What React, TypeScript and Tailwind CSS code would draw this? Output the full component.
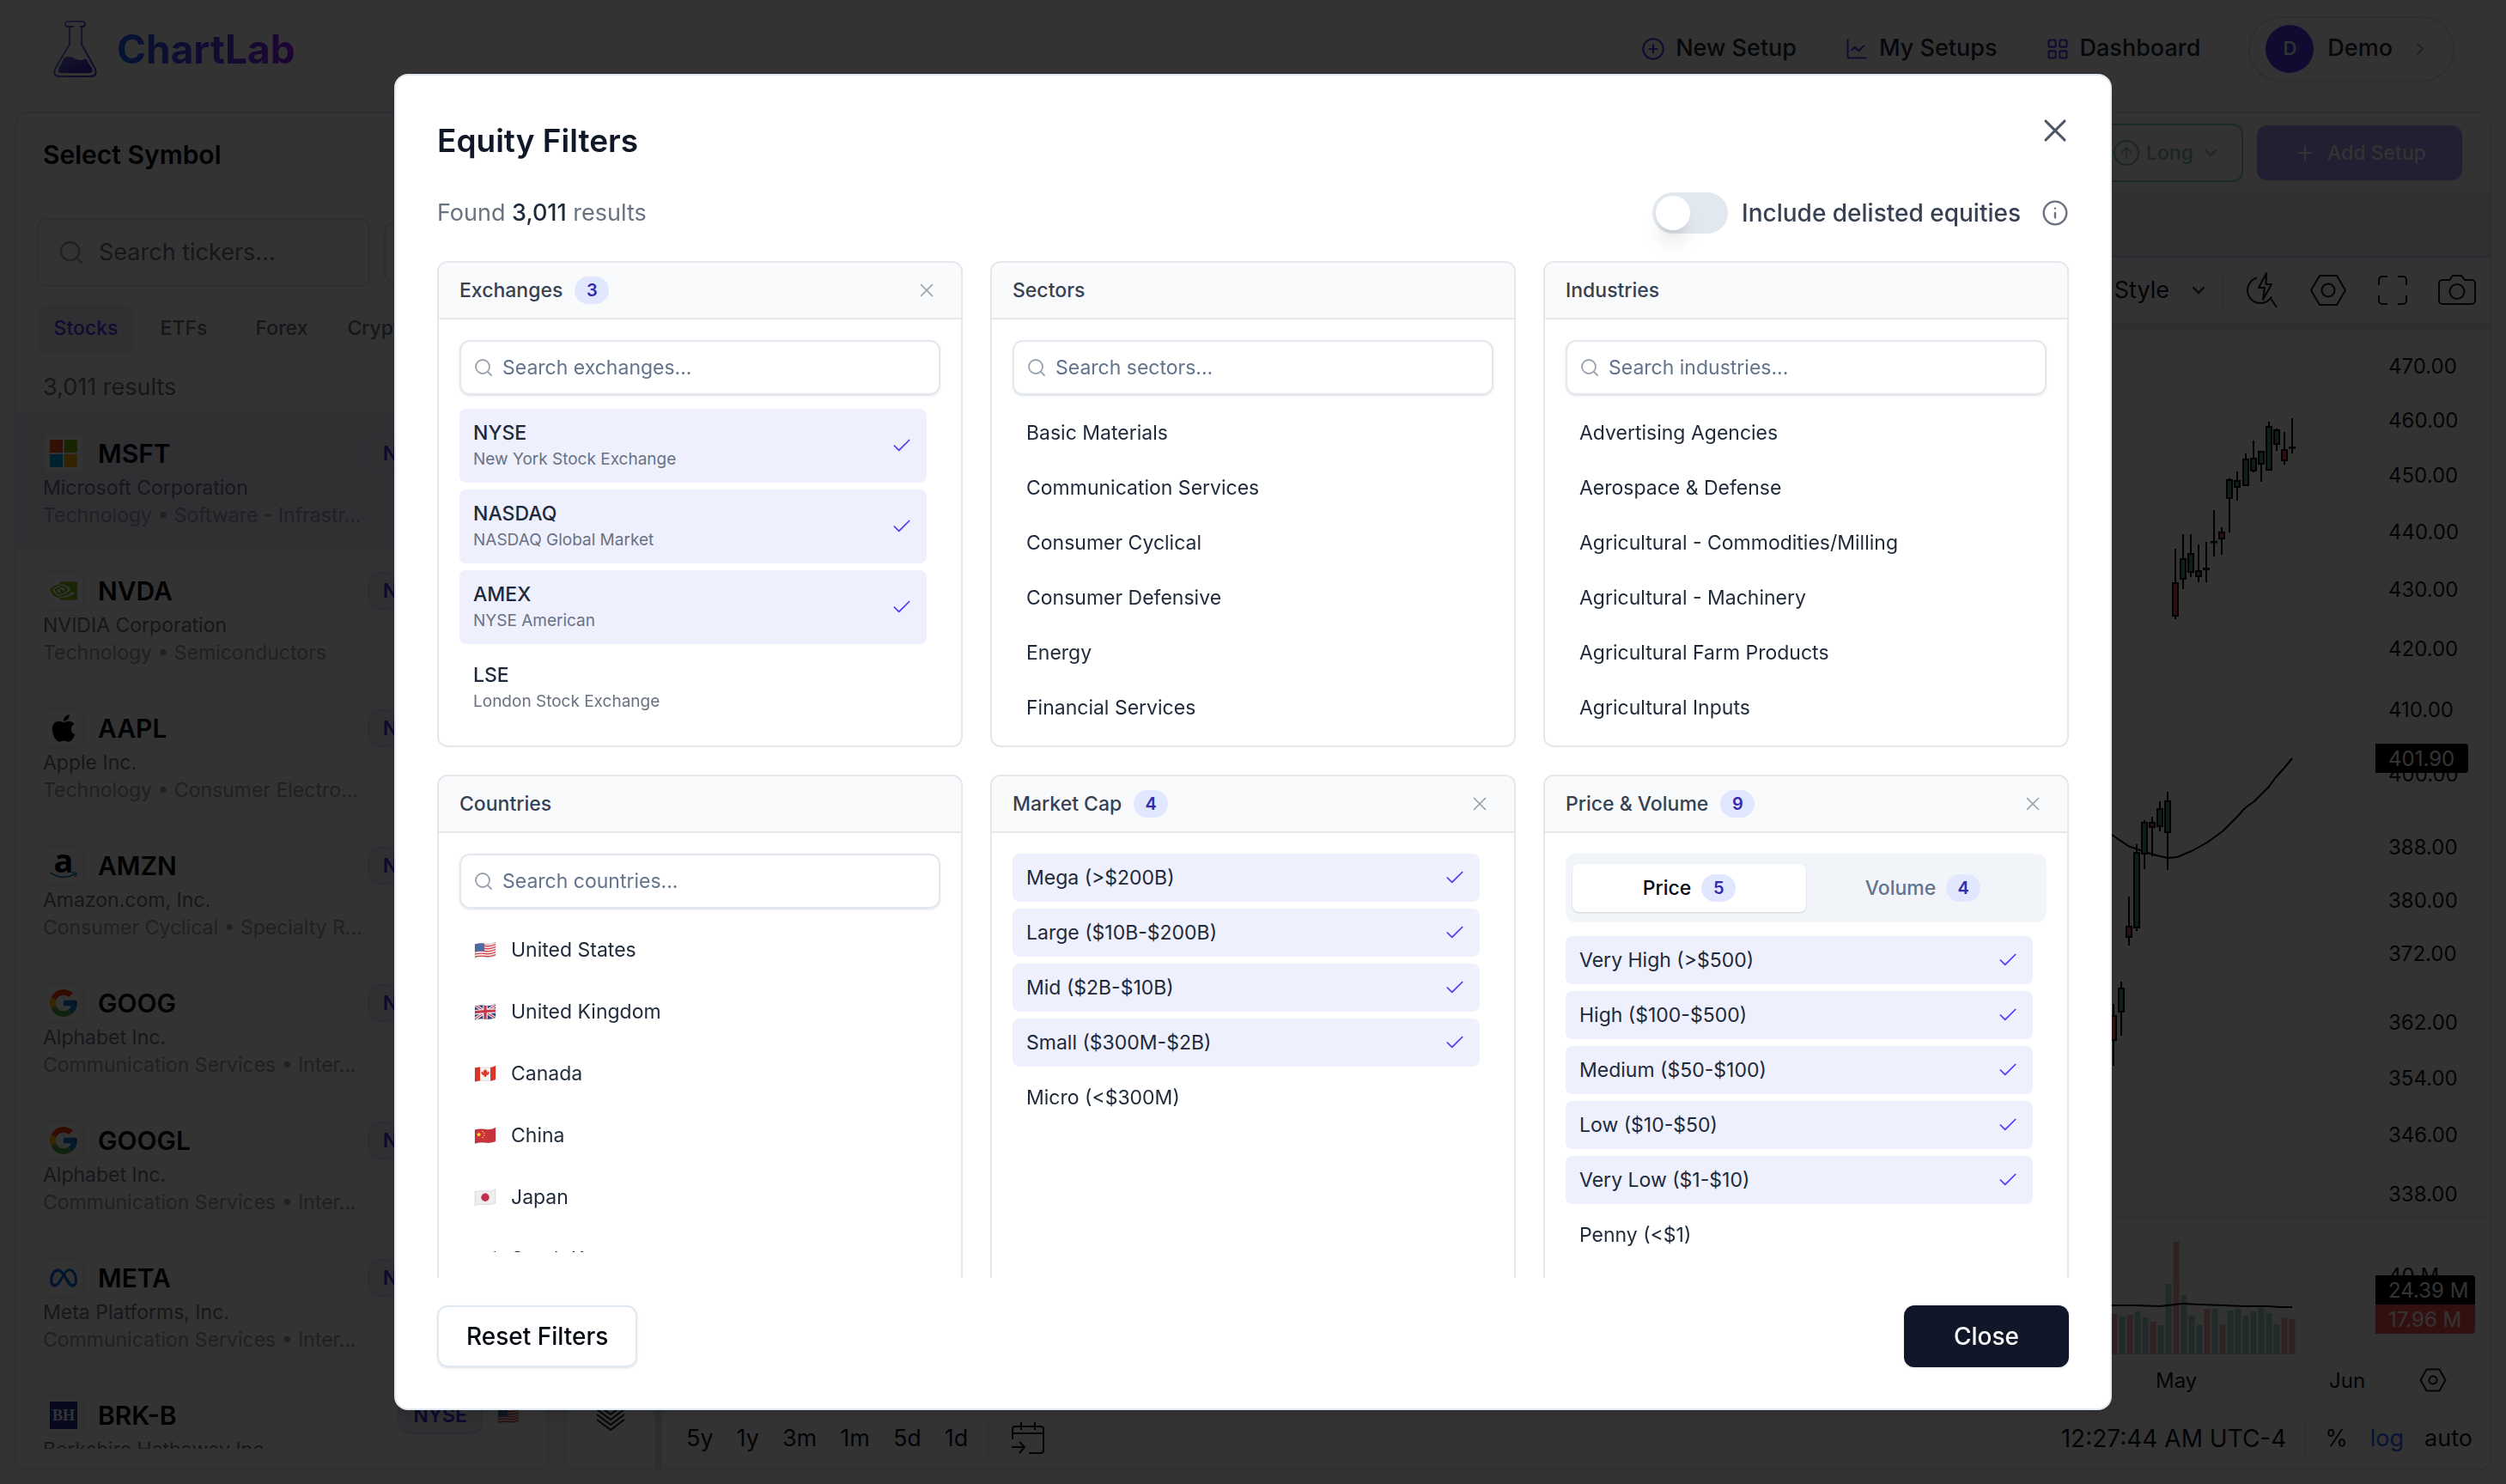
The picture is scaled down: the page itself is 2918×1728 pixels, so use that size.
import { useId } from "react";
import type { ReactNode } from "react";
import {
  ArrowUp,
  Check,
  ChevronDown,
  ChevronRight,
  CirclePlus,
  Info,
  LayoutGrid,
  LineChart,
  Plus,
  Search,
  SlidersHorizontal,
  X,
} from "lucide-react";
import { FaApple } from "react-icons/fa";
import { FcGoogle } from "react-icons/fc";
import { SiMeta, SiNvidia } from "react-icons/si";

/* ---------- Logos ---------- */

function Flask() {
  return (
    <svg viewBox="60 20 56 72" className="h-[72px] w-14" fill="none" aria-hidden="true">
      <defs>
        <linearGradient id="flask" x1="0" y1="0" x2="1" y2="1">
          <stop offset="0" stopColor="#818cf8" />
          <stop offset="1" stopColor="#4338ca" />
        </linearGradient>
        <linearGradient id="liquid" x1="0" y1="0" x2="1" y2="1">
          <stop offset="0" stopColor="#6d6be0" />
          <stop offset="1" stopColor="#3520b8" />
        </linearGradient>
      </defs>
      <path d="M85 30h-6a2.800 2.800 0 0 1 0-6h17a2.800 2.800 0 0 1 0 6h-2" stroke="url(#flask)" strokeWidth="1.800" strokeLinecap="round" />
      <path d="M81 31v19.500L64.500 78.500q-4 9.500 6 9.500h34q10 0 6-9.500L95 50.500V31" stroke="url(#flask)" strokeWidth="2" strokeLinejoin="round" />
      <path d="M75 66q6-2.500 12 1t13 0.500l7 11q2 5.500-4 5.500H72q-6 0-3.500-5.500z" fill="url(#liquid)" />
    </svg>
  );
}

function MicrosoftLogo() {
  return (
    <svg viewBox="0 0 32 32" className="size-8" aria-hidden="true">
      <path fill="#f25022" d="M0 0h15v15H0z" />
      <path fill="#7fba00" d="M17 0h15v15H17z" />
      <path fill="#00a4ef" d="M0 17h15v15H0z" />
      <path fill="#ffb900" d="M17 17h15v15H17z" />
    </svg>
  );
}

function AmazonLogo() {
  return (
    <span className="flex flex-col items-center">
      <span className="h-[22px] font-['Open_Sans',sans-serif] text-[38px] leading-[16px] font-bold text-black">a</span>
      <svg viewBox="0 0 32 9" className="h-[9px] w-8" fill="none" aria-hidden="true">
        <path d="M1 1.500q14 9 28 1.500" stroke="#0c7bc4" strokeWidth="1.800" strokeLinecap="round" />
        <path d="M26 1.200q4.500-.8 5 0 .4 1.500-1.500 4.600" stroke="#0c7bc4" strokeWidth="1.400" strokeLinecap="round" />
      </svg>
    </span>
  );
}

function BerkshireLogo() {
  return (
    <span className="flex size-8 items-center justify-center bg-[#2f3192] font-['Liberation_Serif',serif] text-lg font-bold text-white">
      BH
    </span>
  );
}

/* ---------- Flags ---------- */

const WAVE = "M2 4.500q6.500 -1.500 12.500 -.5t11.500 -2V18q-5.500 2.500 -11.500 1.500T2 20.500z";

function Flag({ children }: { children: ReactNode }) {
  const id = useId();
  return (
    <svg viewBox="0 0 28 22" className="h-[22px] w-7 shrink-0" aria-hidden="true">
      <clipPath id={id}>
        <path d={WAVE} />
      </clipPath>
      <g clipPath={`url(#${id})`}>{children}</g>
      <path d={WAVE} fill="none" stroke="#000" strokeOpacity=".15" strokeWidth=".7" />
    </svg>
  );
}

function FlagUS() {
  return (
    <Flag>
      <path fill="#f6f1f2" d="M0 0h28v22H0z" />
      {[3, 6, 9, 12, 15, 18, 21].map((y) => (
        <path key={y} d={`M2 ${y + 1}q6.500-1.500 12.500-.5t11.500-2`} stroke="#d8434f" strokeWidth="1.400" fill="none" />
      ))}
      <path fill="#4a6ba8" d="M2 2h11v10.500q-5 -.5 -11 .8z" />
    </Flag>
  );
}

function FlagGB() {
  return (
    <Flag>
      <path fill="#2b4080" d="M0 0h28v22H0z" />
      <path d="M0 2l28 18M0 21L28 2" stroke="#f2f2f4" strokeWidth="3.500" />
      <path d="M0 2l28 18M0 21L28 2" stroke="#c8384b" strokeWidth="1.200" />
      <path d="M14 0v22M0 12q14-2 28-2" stroke="#f2f2f4" strokeWidth="5.500" fill="none" />
      <path d="M14 0v22M0 12q14-2 28-2" stroke="#c8384b" strokeWidth="3.200" fill="none" />
    </Flag>
  );
}

function FlagCA() {
  return (
    <Flag>
      <path fill="#f4f3f4" d="M0 0h28v22H0z" />
      <path fill="#dc3427" d="M0 0h8v22H0zM20 0h8v22h-8z" />
      <path fill="#e3392c" d="M14 5.500l1.200 2.200 1.200-.5-.4 2.800 2-1.400.7 1.300-.8 2-2.800 1.600.1 1.500h-2.400l.1-1.500-2.800-1.600-.8-2 .7-1.300 2 1.400-.4-2.800 1.200.5z" />
    </Flag>
  );
}

function FlagCN() {
  return (
    <Flag>
      <path fill="#c9333c" d="M0 0h28v22H0z" />
      <path fill="#f6d33c" d="M6.500 7l.9 1.900 2 .2-1.500 1.400.4 2-1.800-1-1.800 1 .4-2-1.500-1.400 2-.2z" />
      <g fill="#f6d33c">
        <circle cx="11" cy="6.500" r=".8" />
        <circle cx="12.800" cy="8.500" r=".8" />
        <circle cx="12.800" cy="11.200" r=".8" />
        <circle cx="11" cy="13.500" r=".8" />
      </g>
    </Flag>
  );
}

function FlagJP() {
  return (
    <Flag>
      <path fill="#eeeef0" d="M0 0h28v22H0z" />
      <circle cx="14" cy="11.200" r="4.700" fill="#bf3049" />
    </Flag>
  );
}

function FlagKR() {
  return (
    <Flag>
      <path fill="#eeeef0" d="M0 0h28v22H0z" />
      <path d="M15 4.200q5 0 11-2.200" stroke="#222" strokeWidth="2" fill="none" />
      <circle cx="14" cy="11.500" r="4" fill="#c63447" />
      <path fill="#2d4f9b" d="M10 11.500a4 4 0 0 0 8 0 2 2 0 0 0-4 0 2 2 0 0 1-4 0z" />
    </Flag>
  );
}

/* ---------- Page header ---------- */

function PageHeader() {
  return (
    <header className="flex h-[114px] shrink-0 items-center justify-between border-b border-gray-100 bg-white px-[60px]">
      <a href="#" className="flex items-center gap-5">
        <Flask />
        <span className="bg-linear-to-r from-blue-600 via-indigo-600 to-purple-600 bg-clip-text text-[46px] leading-[60px] font-bold text-transparent">
          ChartLab
        </span>
      </a>
      <nav className="flex items-center gap-14 text-[27px] font-medium text-gray-800">
        <a href="#" className="flex items-center gap-3">
          <CirclePlus className="size-7 text-indigo-600" strokeWidth={1.8} />
          New Setup
        </a>
        <a href="#" className="flex items-center gap-3">
          <LineChart className="size-7 text-indigo-600" strokeWidth={1.8} />
          My Setups
        </a>
        <a href="#" className="flex items-center gap-3">
          <LayoutGrid className="size-7 text-indigo-600" strokeWidth={1.8} />
          Dashboard
        </a>
        <button className="flex h-[76px] items-center gap-4 rounded-full border-2 border-gray-200 pr-[26px] pl-[18px] shadow-sm">
          <span className="flex size-14 items-center justify-center rounded-full bg-indigo-600 text-[22px] font-medium text-white">D</span>
          Demo
          <ChevronRight className="ml-1 size-6 text-gray-400" strokeWidth={1.8} />
        </button>
      </nav>
    </header>
  );
}

/* ---------- Symbol list ---------- */

type Symbol = { ticker: string; name: string; sector: string; exchange: string; logo: ReactNode };

const SYMBOLS: Symbol[] = [
  { ticker: "MSFT", name: "Microsoft Corporation", sector: "Technology • Software - Infrastr...", exchange: "NASDAQ", logo: <MicrosoftLogo /> },
  { ticker: "NVDA", name: "NVIDIA Corporation", sector: "Technology • Semiconductors", exchange: "NASDAQ", logo: <SiNvidia className="size-8 text-[#76b900]" /> },
  { ticker: "AAPL", name: "Apple Inc.", sector: "Technology • Consumer Electro...", exchange: "NASDAQ", logo: <FaApple className="size-9 text-black" /> },
  { ticker: "AMZN", name: "Amazon.com, Inc.", sector: "Consumer Cyclical • Specialty R...", exchange: "NASDAQ", logo: <AmazonLogo /> },
  { ticker: "GOOG", name: "Alphabet Inc.", sector: "Communication Services • Inter...", exchange: "NASDAQ", logo: <FcGoogle className="size-[38px]" /> },
  { ticker: "GOOGL", name: "Alphabet Inc.", sector: "Communication Services • Inter...", exchange: "NASDAQ", logo: <FcGoogle className="size-[38px]" /> },
  { ticker: "META", name: "Meta Platforms, Inc.", sector: "Communication Services • Inter...", exchange: "NASDAQ", logo: <SiMeta className="size-8 text-[#0a6be4]" /> },
  { ticker: "BRK-B", name: "Berkshire Hathaway Inc.", sector: "Financial Services • Insurance", exchange: "NYSE", logo: <BerkshireLogo /> },
];

function SymbolRow({ symbol, active }: { symbol: Symbol; active: boolean }) {
  return (
    <li className={active ? "h-40 border-b border-gray-100 bg-[#eef0fe] px-[31px] py-6" : "h-40 border-b border-gray-100 px-[31px] py-6"}>
      <div className="flex h-12 items-center">
        <span className="flex size-12 shrink-0 items-center justify-center rounded-lg border border-gray-200 bg-white">{symbol.logo}</span>
        <span className="ml-4 flex-1 text-[30px] font-semibold text-gray-950">{symbol.ticker}</span>
        <span className="mr-4 flex h-11 items-center rounded-xl border-2 border-indigo-100 bg-[#eef0fe] px-4 text-[23px] font-semibold text-indigo-700">
          {symbol.exchange}
        </span>
        <FlagUS />
      </div>
      <p className="text-[23px] leading-8 whitespace-nowrap text-gray-500">{symbol.name}</p>
      <p className="text-[23px] leading-8 whitespace-nowrap text-gray-400">{symbol.sector}</p>
    </li>
  );
}

function SymbolPanel() {
  return (
    <aside className="flex w-[622px] shrink-0 flex-col overflow-hidden rounded-2xl border-2 border-indigo-100 bg-white pb-6">
      <h2 className="flex h-[98px] shrink-0 items-center border-b border-gray-100 px-[31px] text-[30px] font-semibold text-gray-950">Select Symbol</h2>
      <div className="mx-6 mt-6 flex shrink-0 items-center gap-4">
        <label className="flex h-20 w-[388px] items-center gap-4 rounded-xl border-2 border-gray-200 px-[22px]">
          <Search className="size-8 shrink-0 text-gray-400" strokeWidth={1.8} />
          <input aria-label="Search tickers" placeholder="Search tickers..." className="w-full min-w-0 text-[27px] outline-none placeholder:text-gray-500" />
        </label>
        <button aria-label="Filters" className="flex h-[72px] flex-1 items-center justify-center rounded-xl border-2 border-gray-200">
          <SlidersHorizontal className="size-7 text-gray-500" />
        </button>
      </div>
      <div className="mx-6 mt-5 grid h-[68px] shrink-0 grid-cols-5 border-b border-gray-100 pb-2.5 text-[23px] font-medium text-gray-500">
        <button className="rounded-xl bg-[#eef0fe] text-indigo-600">Stocks</button>
        <button>ETFs</button>
        <button>Forex</button>
        <button>Crypto</button>
        <button>Indices</button>
      </div>
      <p className="shrink-0 px-[31px] text-[27px] leading-[58px] text-gray-500">3,011 results</p>
      <ul className="min-h-0 flex-1 overflow-hidden">
        {SYMBOLS.map((s, i) => (
          <SymbolRow key={s.ticker} symbol={s} active={i === 0} />
        ))}
      </ul>
    </aside>
  );
}

/* ---------- Chart ---------- */

// [x, high, body top, body bottom, low, colour]
const CANDLES: [number, number, number, number, number, string][] = [
  [2461, 1169, 1182, 1212, 1241, "r"],
  [2470, 1143, 1150, 1179, 1206, "g"],
  [2479, 1044, 1078, 1092, 1101, "r"],
  [2488, 983, 992, 1081, 1084, "g"],
  [2497, 955, 957, 995, 1012, "g"],
  [2506, 951, 957, 964, 997, "r"],
  [2515, 933, 941, 963, 968, "g"],
  [2524, 922, 932, 970, 1013, "g"],
  [2533, 639, 678, 718, 721, "r"],
  [2542, 622, 650, 675, 686, "g"],
  [2551, 622, 644, 667, 672, "g"],
  [2560, 634, 664, 672, 678, "g"],
  [2569, 631, 661, 664, 678, "k"],
  [2578, 594, 630, 631, 648, "k"],
  [2587, 614, 619, 628, 646, "r"],
  [2596, 557, 558, 581, 620, "g"],
  [2605, 549, 559, 568, 583, "g"],
  [2615, 528, 534, 566, 566, "g"],
  [2624, 513, 533, 549, 550, "g"],
  [2633, 525, 525, 541, 561, "g"],
  [2642, 491, 496, 548, 548, "g"],
  [2651, 499, 500, 518, 525, "g"],
  [2660, 503, 523, 537, 541, "r"],
  [2669, 487, 520, 521, 528, "k"],
];

// [x, top, colour]
const VOLUMES: [number, number, string][] = [
  [2462, 1530, "r"], [2471, 1533, "g"], [2480, 1531, "r"], [2489, 1527, "g"],
  [2498, 1534, "g"], [2507, 1539, "r"], [2516, 1543, "g"], [2525, 1495, "g"],
  [2534, 1446, "r"], [2543, 1508, "g"], [2552, 1532, "g"], [2561, 1543, "g"],
  [2570, 1524, "r"], [2579, 1524, "g"], [2588, 1542, "r"], [2597, 1526, "g"],
  [2606, 1524, "g"], [2615, 1532, "g"], [2624, 1527, "g"], [2633, 1523, "g"],
  [2642, 1529, "g"], [2651, 1542, "g"], [2660, 1534, "r"], [2669, 1536, "r"],
];

const PRICES: [string, number][] = [
  ["470.00", 426], ["460.00", 489], ["450.00", 553], ["440.00", 619], ["430.00", 686],
  ["420.00", 755], ["410.00", 826], ["400.00", 901], ["388.00", 986], ["380.00", 1048],
  ["372.00", 1110], ["362.00", 1190], ["354.00", 1255], ["346.00", 1321], ["338.00", 1390],
];

function PriceChart() {
  return (
    <svg viewBox="2438 384 461 1250" className="h-[1250px] w-[461px] shrink-0 self-end font-['Inter',sans-serif] text-2xl" role="img" aria-label="Price and volume chart">
      <path d="M2438 1416.500h461" stroke="#e0e3eb" />
      <polyline
        fill="none"
        stroke="#000"
        strokeWidth="2"
        strokeLinejoin="round"
        points="2440,962 2459,972 2478,985 2492,990 2507,995 2524,999 2535,998 2552,991 2570,981 2588,968 2605,951 2614,941 2625,933 2642,916 2650,905 2660,894 2669,883"
      />
      {CANDLES.map(([x, high, top, bottom, low, c]) => (
        <g key={x}>
          <path d={`M${x} ${high}V${low}`} stroke="#000" strokeWidth="2" />
          <rect
            x={x - 3}
            y={top + 1}
            width="6"
            height={Math.max(bottom - top - 2, 0.5)}
            fill={c === "r" ? "#e64545" : c === "g" ? "#469b82" : "#000"}
            stroke="#000"
            strokeWidth="2"
          />
        </g>
      ))}
      {VOLUMES.map(([x, top, c]) => (
        <rect key={x} x={x - 3.5} y={top} width="7" height={1577 - top} fill={c === "r" ? "#f5a9a9" : "#a0d2c8"} />
      ))}
      <polyline fill="none" stroke="#000" strokeWidth="2" points="2440,1520 2486,1520 2515,1521 2541,1518 2562,1519 2589,1520 2613,1521 2641,1521 2654,1522 2669,1522" />
      {PRICES.map(([label, y]) => (
        <text key={label} x="2781" y={y + 9} fill="#131722">{label}</text>
      ))}
      <text x="2781" y="1494" fill="#131722">40 M</text>
      <path d="M2766 866h104a4 4 0 0 1 4 4v26a4 4 0 0 1-4 4h-104z" fill="#000" />
      <text x="2781" y="892" fill="#fff">401.90</text>
      <path d="M2766 1485h112a4 4 0 0 1 4 4v30h-116z" fill="#000" />
      <text x="2781" y="1511" fill="#fff">24.39 M</text>
      <path d="M2766 1519h116v30a4 4 0 0 1-4 4h-112z" fill="#ff5252" />
      <text x="2781" y="1545" fill="#fff">17.96 M</text>
      <text x="2510" y="1616" fill="#131722">May</text>
      <text x="2712" y="1616" fill="#131722">Jun</text>
      <g fill="none" stroke="#131722" strokeWidth="2">
        <path d="M2825.500 1594.500h15l7 12.500-7 12.500h-15l-7-12.500z" strokeLinejoin="round" />
        <circle cx="2833" cy="1607" r="4.500" />
      </g>
    </svg>
  );
}

function ChartToolbar() {
  return (
    <div className="flex h-[76px] shrink-0 items-center justify-end pr-4 text-[#131722]">
      <button className="flex items-center gap-[22px] text-[27px]">
        Style
        <ChevronDown className="size-6" strokeWidth={1.8} />
      </button>
      <span className="ml-4 h-11 w-px bg-gray-200" />
      <button aria-label="Quick search" className="ml-[26px]">
        <svg viewBox="0 0 38 44" className="h-11 w-[38px]" fill="none" stroke="currentColor" strokeWidth="2" aria-hidden="true">
          <path d="M13 7.500a15 15 0 1 0 17 22M28 30l8 12M24 2l-9 17h7l-2 14 10-18h-6.500z" strokeLinejoin="round" />
        </svg>
      </button>
      <button aria-label="Chart settings" className="ml-9">
        <svg viewBox="0 0 44 38" className="h-[38px] w-11" fill="none" stroke="currentColor" strokeWidth="2" aria-hidden="true">
          <path d="M12 2h20l10 17-10 17H12L2 19z" strokeLinejoin="round" />
          <circle cx="22" cy="19" r="7.500" />
        </svg>
      </button>
      <button aria-label="Fullscreen" className="ml-9">
        <svg viewBox="0 0 34 34" className="size-[34px]" fill="none" stroke="currentColor" strokeWidth="2" aria-hidden="true">
          <path d="M1 11V5a4 4 0 0 1 4-4h6M23 1h6a4 4 0 0 1 4 4v6M33 23v6a4 4 0 0 1-4 4h-6M11 33H5a4 4 0 0 1-4-4v-6" />
        </svg>
      </button>
      <button aria-label="Take a snapshot" className="ml-9">
        <svg viewBox="0 0 44 36" className="h-9 w-11" fill="none" stroke="currentColor" strokeWidth="2" aria-hidden="true">
          <path d="M5 6h8l4-5h10l4 5h8a4 4 0 0 1 4 4v20a4 4 0 0 1-4 4H5a4 4 0 0 1-4-4V10a4 4 0 0 1 4-4z" />
          <circle cx="22" cy="19.500" r="8.500" />
        </svg>
      </button>
    </div>
  );
}

function ChartFooter() {
  return (
    <div className="flex h-[77px] shrink-0 items-center justify-between border-t border-[#e0e3eb] pt-1 pr-5 pl-7 text-[27px] text-[#131722]">
      <div className="flex items-center gap-[27px]">
        {["5y", "1y", "3m", "1m", "5d", "1d"].map((r) => (
          <button key={r}>{r}</button>
        ))}
        <span className="-ml-1 h-11 w-px bg-gray-200" />
        <button aria-label="Go to date">
          <svg viewBox="0 0 38 38" className="size-[38px]" fill="none" stroke="currentColor" strokeWidth="2" aria-hidden="true">
            <path d="M1 20V8a3 3 0 0 1 3-3h30a3 3 0 0 1 3 3v25a3 3 0 0 1-3 3H20M1 13h36M11 0v9M27 0v9M0 29h14M9 23l6 6-6 7" />
          </svg>
        </button>
      </div>
      <div className="flex items-center">
        <button className="text-[28px]">12:27:44 AM UTC-4</button>
        <span className="mx-[22px] h-11 w-px bg-gray-200" />
        <button>%</button>
        <button className="ml-[26px] text-[#2962ff]">log</button>
        <button className="ml-6">auto</button>
      </div>
    </div>
  );
}

function ChartPanel() {
  return (
    <section className="flex min-w-0 flex-1 flex-col overflow-hidden rounded-2xl border-2 border-indigo-100 bg-white">
      <div className="flex h-[92px] shrink-0 items-center justify-end gap-4 px-8 text-[23px] font-medium opacity-50">
        <button className="flex h-[68px] items-center rounded-xl border-2 border-[#16a34a] bg-green-50 px-6 text-[#15803d]">
          <span className="flex size-[30px] items-center justify-center rounded-full border-2 border-[#15803d]">
            <ArrowUp className="size-5" />
          </span>
          <span className="ml-2">Long</span>
          <ChevronDown className="ml-2 size-6" strokeWidth={1.8} />
        </button>
        <button className="flex h-16 items-center gap-3 rounded-xl bg-indigo-600 px-[42px] text-white">
          <Plus className="size-7" strokeWidth={1.6} />
          Add Setup
        </button>
      </div>
      <div className="h-[76px] shrink-0 border-b-2 border-indigo-200 bg-[#ebf0fa]" />
      <ChartToolbar />
      <div className="h-2 shrink-0 bg-[#e0e3eb]" />
      <div className="flex min-h-0 flex-1">
        <div className="flex w-[112px] shrink-0 flex-col items-center justify-end border-r-8 border-[#e0e3eb] pb-11">
          <svg viewBox="0 0 34 34" className="size-[34px]" fill="none" stroke="#131722" strokeWidth="2" aria-hidden="true">
            <path d="M1 2l16 12L33 2M1 8l16 12L33 8M1 14l16 12 16-12M1 20l16 12 16-12" />
          </svg>
        </div>
        <div className="flex min-w-0 flex-1 flex-col justify-end">
          <PriceChart />
          <ChartFooter />
        </div>
      </div>
    </section>
  );
}

/* ---------- Equity filters dialog ---------- */

function Badge({ children }: { children: ReactNode }) {
  return (
    <span className="flex h-8 min-w-10 items-center justify-center rounded-full bg-indigo-100 px-3 text-xl font-semibold text-indigo-800">
      {children}
    </span>
  );
}

function FilterCard({ title, count, children }: { title: string; count?: number; children: ReactNode }) {
  return (
    <section className="flex flex-col overflow-hidden rounded-xl border-2 border-gray-200">
      <div className="flex h-[66px] shrink-0 items-center gap-3.5 border-b-2 border-gray-200 bg-gray-50 px-6">
        <h3 className="text-[23px] font-medium text-gray-700">{title}</h3>
        {count !== undefined && <Badge>{count}</Badge>}
        {count !== undefined && (
          <button aria-label={`Clear ${title}`} className="mr-[3px] ml-auto text-gray-400">
            <X className="size-[26px]" strokeWidth={1.6} />
          </button>
        )}
      </div>
      <div className="flex flex-col gap-4 p-6">{children}</div>
    </section>
  );
}

function SearchBox({ name }: { name: string }) {
  return (
    <label className="flex h-16 shrink-0 items-center gap-2.5 rounded-xl border-2 border-slate-200 px-3.5 shadow-sm">
      <Search className="size-6 shrink-0 text-gray-400" strokeWidth={1.8} />
      <input
        aria-label={`Search ${name}`}
        placeholder={`Search ${name}...`}
        className="w-full min-w-0 text-[23px] text-gray-800 outline-none placeholder:text-slate-500"
      />
    </label>
  );
}

function OptionList({ tall, children }: { tall?: boolean; children: ReactNode }) {
  return <div className={tall ? "flex h-96 flex-col gap-2 overflow-hidden pr-4" : "flex h-[368px] flex-col gap-2 overflow-hidden pr-4"}>{children}</div>;
}

function Option({ label, detail, selected, flag }: { label: string; detail?: string; selected?: boolean; flag?: ReactNode }) {
  return (
    <button
      aria-pressed={!!selected}
      className={
        selected
          ? "flex shrink-0 items-center gap-4 rounded-lg bg-[#eef0fe] px-4 py-3 text-left text-[23px] text-gray-800"
          : "flex shrink-0 items-center gap-4 rounded-lg px-4 py-3 text-left text-[23px] text-gray-800"
      }
    >
      {flag}
      <span className={flag ? "flex-1 leading-10" : "flex-1 leading-8"}>
        <span className={detail ? "block font-medium" : "block"}>{label}</span>
        {detail && <span className="block text-[19px] leading-[30px] text-gray-500">{detail}</span>}
      </span>
      {selected && <Check className="size-[26px] text-indigo-600" strokeWidth={1.6} />}
    </button>
  );
}

const SECTORS = ["Basic Materials", "Communication Services", "Consumer Cyclical", "Consumer Defensive", "Energy", "Financial Services"];
const INDUSTRIES = [
  "Advertising Agencies",
  "Aerospace & Defense",
  "Agricultural - Commodities/Milling",
  "Agricultural - Machinery",
  "Agricultural Farm Products",
  "Agricultural Inputs",
];

function FiltersDialog() {
  return (
    <div
      role="dialog"
      aria-modal="true"
      aria-labelledby="filters-title"
      className="relative flex h-[90vh] w-full max-w-[2000px] flex-col rounded-2xl border-2 border-slate-200 bg-white p-12 shadow-lg"
    >
      <h2 id="filters-title" className="text-[37px] leading-[56px] font-semibold text-gray-900">Equity Filters</h2>
      <button aria-label="Close dialog" className="absolute top-[42px] right-[42px] text-gray-600">
        <X className="size-11" strokeWidth={1.7} />
      </button>

      <div className="mt-8 flex h-12 shrink-0 items-center text-[27px]">
        <p className="mr-auto text-gray-500">
          Found <span className="font-medium text-gray-800">3,011</span> results
        </p>
        <button id="delisted" role="switch" aria-checked="false" className="h-12 w-[88px] rounded-full bg-slate-200 p-1">
          <span className="block size-10 rounded-full bg-white shadow-xl" />
        </button>
        <label htmlFor="delisted" className="ml-4 text-[28px] font-medium text-gray-700">Include delisted equities</label>
        <Info className="ml-6 size-8 text-gray-500" strokeWidth={1.8} />
      </div>

      <div className="mt-8 min-h-0 flex-1 overflow-hidden">
        <div className="grid grid-cols-3 gap-8">
          <FilterCard title="Exchanges" count={3}>
            <SearchBox name="exchanges" />
            <OptionList>
              <Option label="NYSE" detail="New York Stock Exchange" selected />
              <Option label="NASDAQ" detail="NASDAQ Global Market" selected />
              <Option label="AMEX" detail="NYSE American" selected />
              <Option label="LSE" detail="London Stock Exchange" />
            </OptionList>
          </FilterCard>
          <FilterCard title="Sectors">
            <SearchBox name="sectors" />
            <OptionList>
              {SECTORS.map((s) => (
                <Option key={s} label={s} />
              ))}
            </OptionList>
          </FilterCard>
          <FilterCard title="Industries">
            <SearchBox name="industries" />
            <OptionList>
              {INDUSTRIES.map((s) => (
                <Option key={s} label={s} />
              ))}
            </OptionList>
          </FilterCard>
          <FilterCard title="Countries">
            <SearchBox name="countries" />
            <OptionList tall>
              <Option label="United States" flag={<FlagUS />} />
              <Option label="United Kingdom" flag={<FlagGB />} />
              <Option label="Canada" flag={<FlagCA />} />
              <Option label="China" flag={<FlagCN />} />
              <Option label="Japan" flag={<FlagJP />} />
              <Option label="South Korea" flag={<FlagKR />} />
            </OptionList>
          </FilterCard>
          <FilterCard title="Market Cap" count={4}>
            <OptionList>
              <Option label="Mega (>$200B)" selected />
              <Option label="Large ($10B-$200B)" selected />
              <Option label="Mid ($2B-$10B)" selected />
              <Option label="Small ($300M-$2B)" selected />
              <Option label="Micro (<$300M)" />
            </OptionList>
          </FilterCard>
          <FilterCard title="Price & Volume" count={9}>
            <div role="tablist" className="flex h-20 items-center rounded-xl bg-slate-100 px-2 text-[23px] font-medium">
              <button role="tab" aria-selected="true" className="flex h-14 flex-1 items-center justify-center gap-3 rounded-lg bg-white text-gray-950 shadow-sm">
                Price <Badge>5</Badge>
              </button>
              <button role="tab" aria-selected="false" className="flex h-14 flex-1 items-center justify-center gap-3 text-slate-500">
                Volume <Badge>4</Badge>
              </button>
            </div>
            <OptionList tall>
              <Option label="Very High (>$500)" selected />
              <Option label="High ($100-$500)" selected />
              <Option label="Medium ($50-$100)" selected />
              <Option label="Low ($10-$50)" selected />
              <Option label="Very Low ($1-$10)" selected />
              <Option label="Penny (<$1)" />
            </OptionList>
          </FilterCard>
        </div>
      </div>

      <div className="mt-8 flex shrink-0 justify-between text-[28px] font-medium">
        <button className="h-[72px] rounded-xl border-2 border-slate-200 px-8 text-gray-950 shadow-sm">Reset Filters</button>
        <button className="h-[72px] w-48 rounded-xl bg-[#111628] text-slate-50 shadow-sm">Close</button>
      </div>
    </div>
  );
}

export default function App() {
  return (
    <div className="relative flex h-screen flex-col overflow-hidden bg-[#fafafa] font-['Inter',sans-serif]">
      <PageHeader />
      <main className="flex min-h-0 flex-1 gap-[18px] px-[17px] pt-4 pb-[15px]">
        <SymbolPanel />
        <ChartPanel />
      </main>
      <div className="fixed inset-0 flex items-center justify-center bg-black/80">
        <FiltersDialog />
      </div>
    </div>
  );
}
